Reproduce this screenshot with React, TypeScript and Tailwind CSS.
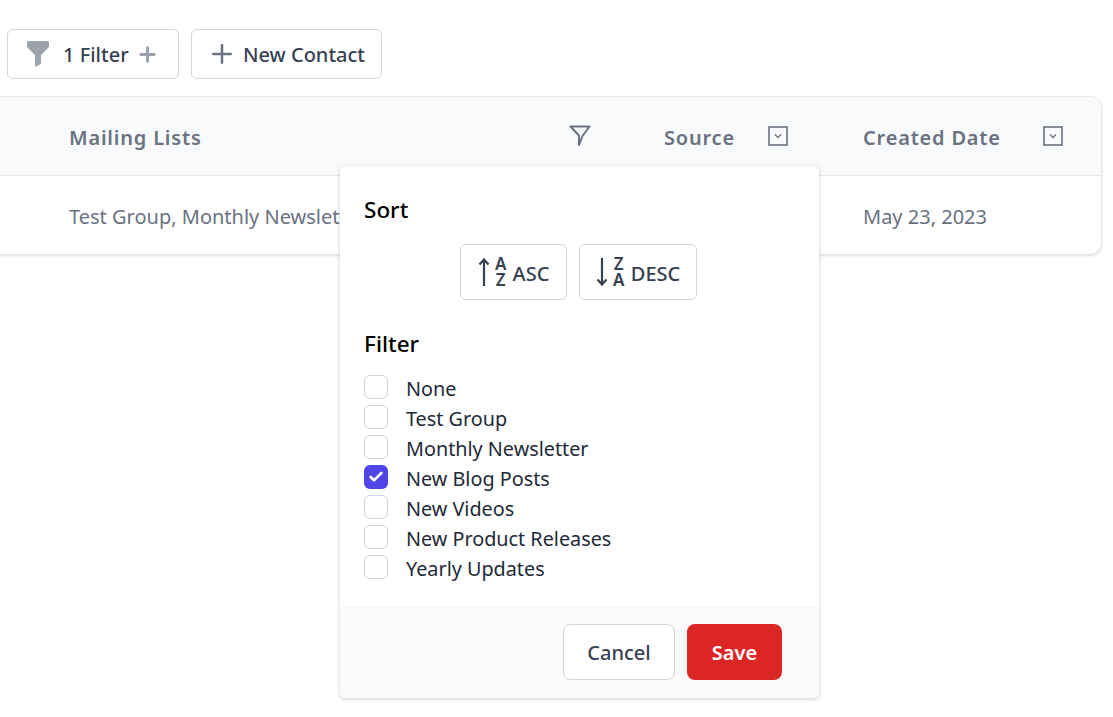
import React from "react";
import { Check, Plus } from "lucide-react";

const lists = [
  { label: "None" },
  { label: "Test Group" },
  { label: "Monthly Newsletter" },
  { label: "New Blog Posts", checked: true },
  { label: "New Videos" },
  { label: "New Product Releases" },
  { label: "Yearly Updates" },
];

const BoxChevron: React.FC = () => (
  <svg width="20" height="20" viewBox="0 0 20 20" fill="none" stroke="#6b7280" className="block">
    <rect x="1" y="1" width="18" height="18" strokeWidth="1.6" />
    <path d="M7 8.500l3 3 3-3" strokeWidth="1.3" />
  </svg>
);

const FilledFunnel: React.FC = () => (
  <svg width="24" height="26" viewBox="0 0 24 26" fill="#9ca3af" className="block">
    <path d="M1 1.500C1 .7 1.600 0 2.400 0h19.200c.8 0 1.400.7 1.400 1.500v4c0 .4-.2.8-.4 1L15 14v9l-6 3V14L1.400 6.500C1.200 6.300 1 5.900 1 5.500z" />
  </svg>
);

const OutlineFunnel: React.FC = () => (
  <svg width="22" height="22" viewBox="0 0 22 22" fill="none" stroke="#6b7280" strokeWidth="2" strokeLinejoin="round" className="block">
    <path d="M1.500 2.500h19L13.500 12 10 21v-9.500z" />
  </svg>
);

const Arrow: React.FC<{ down?: boolean }> = ({ down }) => (
  <svg width="12" height="28" viewBox="0 0 12 28" fill="none" stroke="#374151" strokeWidth="2.200" className="block">
    {down ? <path d="M6 0v26M1.500 21.500l4.500 5 4.500-5" /> : <path d="M6 28V2M1.500 6.500l4.500-5 4.500 5" />}
  </svg>
);

const Letters: React.FC<{ top: string; bottom: string }> = ({ top, bottom }) => (
  <span className="ml-[5px] flex w-[12px] flex-col items-center text-[17px] font-semibold leading-[16px]">
    <span>{top}</span>
    <span>{bottom}</span>
  </span>
);

export default function App() {
  return (
    <div className="h-[717px] w-[1113px] overflow-hidden bg-white font-['Noto_Sans','Open_Sans',sans-serif]">
      <div className="flex gap-3 pl-[7px] pt-[29px]">
        <button className="flex h-[50px] w-[172px] items-center rounded-md border border-gray-300 bg-white pl-[18px] text-[20px] font-medium text-gray-700">
          <FilledFunnel />
          <span className="ml-[13px] pt-[2px]">1 Filter</span>
          <Plus size={23} strokeWidth={3} className="ml-[7px] text-gray-400" />
        </button>
        <button className="flex h-[50px] w-[191px] items-center rounded-md border border-gray-300 bg-white pl-[15px] text-[20px] font-medium text-gray-700">
          <Plus size={30} strokeWidth={2} className="text-gray-500" />
          <span className="ml-[6px] pt-[2px]">New Contact</span>
        </button>
      </div>

      <div className="relative">
        <div className="ml-[-12px] mt-[17px] w-[1114px] overflow-hidden rounded-xl border border-gray-200 bg-white shadow-sm">
          <div className="flex h-[79px] items-center border-b border-gray-200 bg-gray-50 pt-[3px] text-[20px] font-semibold tracking-[0.04em] text-gray-500">
            <div className="ml-[80px] flex w-[522px] items-center justify-between">
              <span>Mailing Lists</span>
              <div className="-translate-y-[3px]">
                <OutlineFunnel />
              </div>
            </div>
            <div className="ml-[73px] flex w-[124px] items-center justify-between">
              <span>Source</span>
              <div className="-translate-y-[2px]">
                <BoxChevron />
              </div>
            </div>
            <div className="ml-[75px] flex w-[200px] items-center justify-between">
              <span>Created Date</span>
              <div className="-translate-y-[2px]">
                <BoxChevron />
              </div>
            </div>
          </div>
          <div className="flex h-[78px] items-center pt-[3px] text-[20px] text-gray-500">
            <div className="ml-[80px] w-[794px] whitespace-nowrap">Test Group, Monthly Newsletter</div>
            <div>May 23, 2023</div>
          </div>
        </div>

        <div className="absolute left-[340px] top-[70px] w-[479px] overflow-hidden rounded-[5px] bg-white shadow-[0_1px_4px_rgba(0,0,0,0.2)]">
          <div className="px-6 pb-[24px] pt-[28px]">
            <h3 className="text-[22.500px] font-medium leading-[32px] text-black">Sort</h3>
            <div className="mt-[18px] flex justify-center gap-3 pr-[2px]">
              <button className="flex h-[56px] w-[107px] items-center justify-center rounded-md border border-gray-300 text-[20px] font-medium text-gray-700">
                <Arrow />
                <Letters top="A" bottom="Z" />
                <span className="ml-[6px] pt-[4px]">ASC</span>
              </button>
              <button className="flex h-[56px] w-[118px] items-center justify-center rounded-md border border-gray-300 text-[20px] font-medium text-gray-700">
                <Arrow down />
                <Letters top="Z" bottom="A" />
                <span className="ml-[6px] pt-[4px]">DESC</span>
              </button>
            </div>
            <h3 className="mt-[28px] text-[22.500px] font-medium leading-[32px] text-black">Filter</h3>
            <div className="mt-[12px] flex flex-col">
              {lists.map((item) => (
                <label key={item.label} className="flex h-[30px] items-center text-[19.800px] text-gray-800">
                  {item.checked ? (
                    <span className="flex h-6 w-6 items-center justify-center rounded-md bg-[#4f46e5] text-white">
                      <Check size={16} strokeWidth={4} />
                    </span>
                  ) : (
                    <span className="h-6 w-6 rounded-md border border-gray-300 bg-white" />
                  )}
                  <span className="ml-[18px] pt-[4px]">{item.label}</span>
                </label>
              ))}
            </div>
          </div>
          <div className="flex h-[92px] items-center justify-end gap-3 bg-gray-50 pr-[37px]">
            <button className="h-[56px] w-[112px] rounded-lg border border-gray-300 bg-white pt-[2px] text-[20px] font-medium text-gray-700">
              Cancel
            </button>
            <button className="h-[56px] w-[95px] rounded-lg bg-[#dc2626] pt-[2px] text-[20px] font-semibold text-white">
              Save
            </button>
          </div>
        </div>
      </div>
    </div>
  );
}
